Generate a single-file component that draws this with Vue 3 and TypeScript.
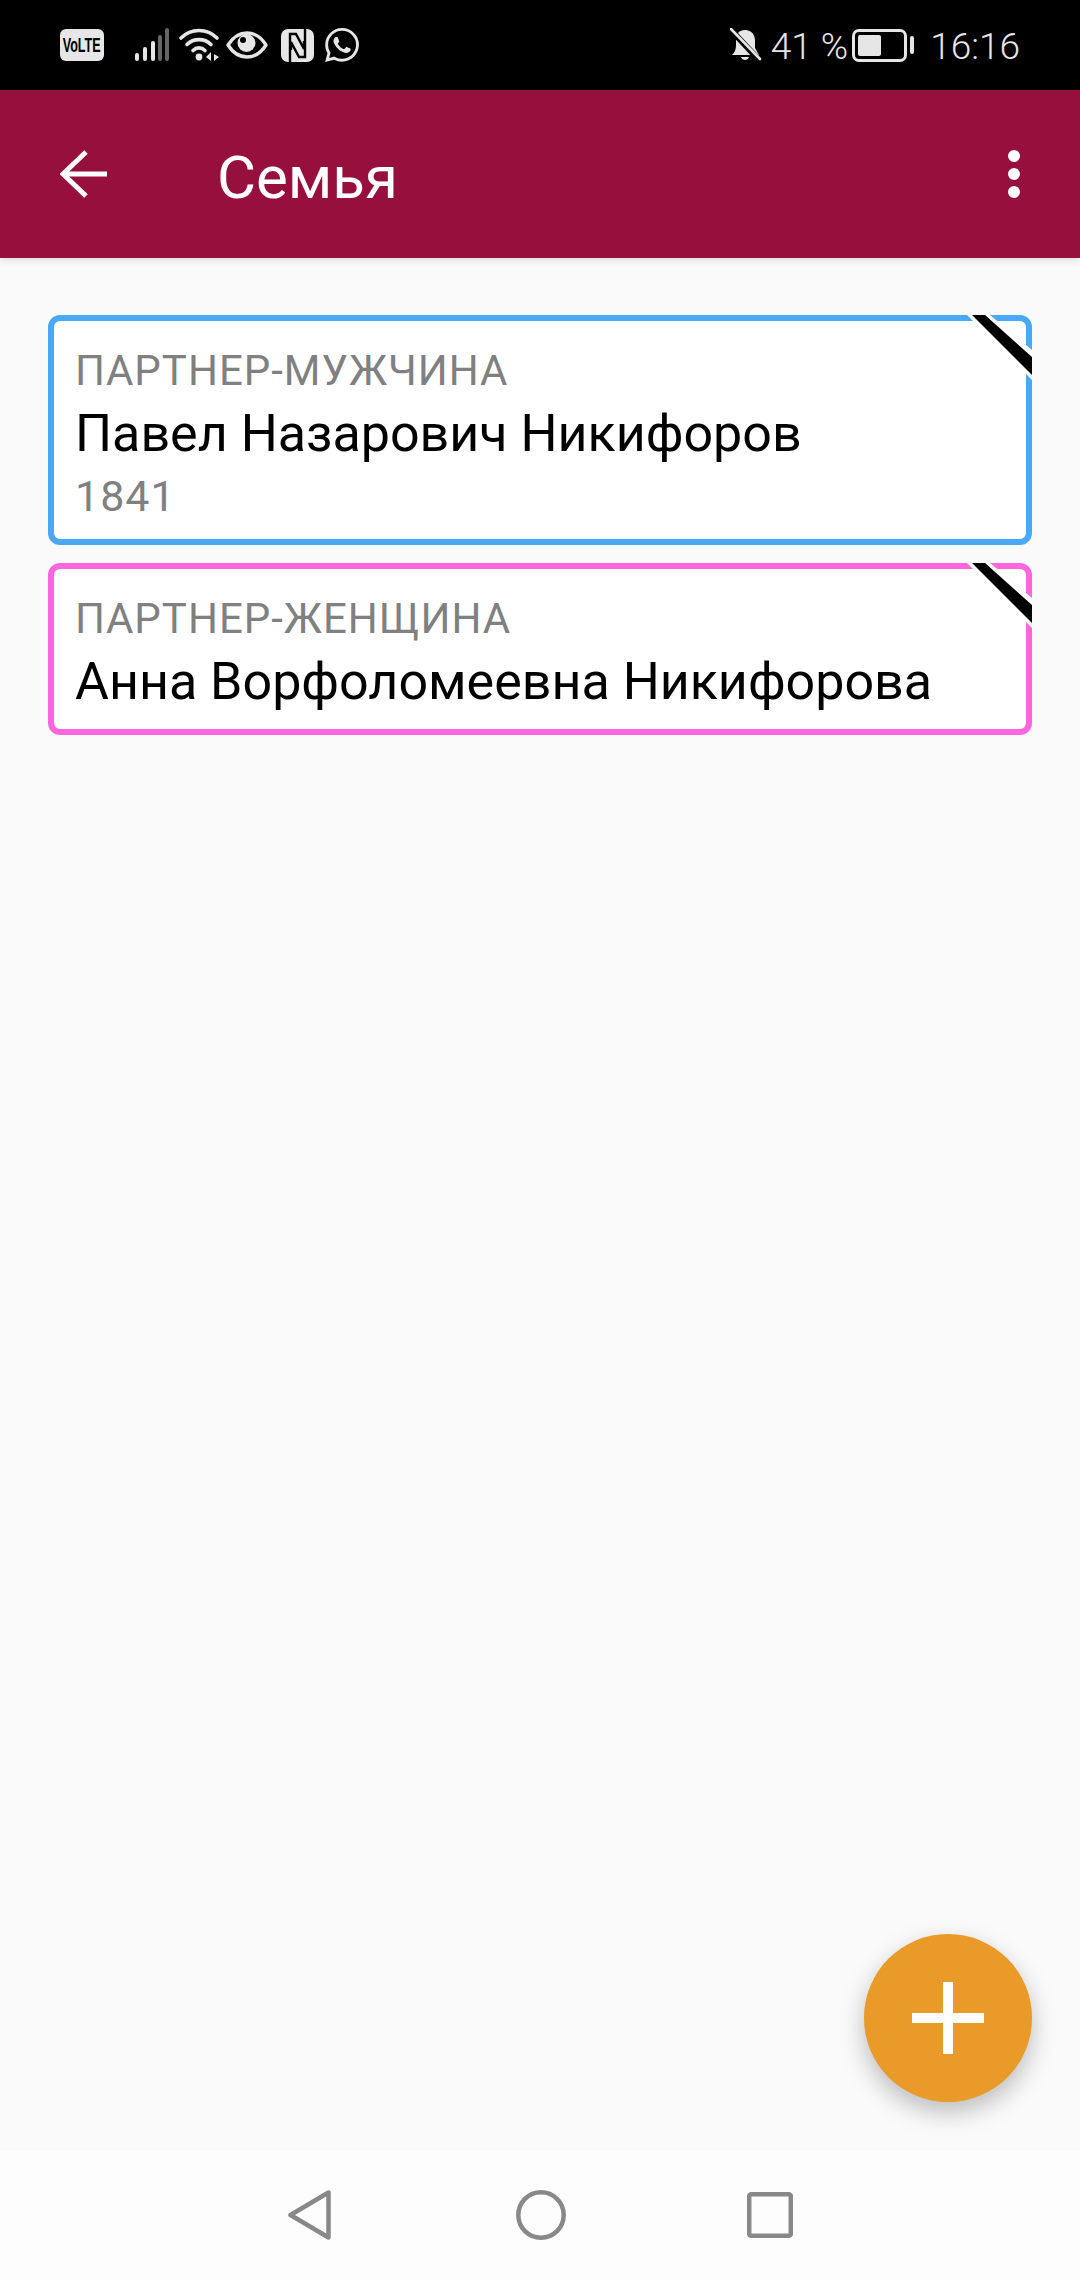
<template>
  <div class="screen">
    <div class="status-bar">
      <div class="status-left">
        <div class="volte"><span>VoLTE</span></div>
        <svg class="ic-signal" width="36" height="34" viewBox="0 0 36 34">
          <rect x="1" y="25" width="4" height="8" rx="2" fill="#e6e6e6" />
          <rect x="9" y="19" width="4" height="14" rx="2" fill="#e6e6e6" />
          <rect x="17" y="13" width="4" height="20" rx="2" fill="#e6e6e6" />
          <rect x="24" y="7" width="4" height="26" rx="2" fill="#666" />
          <rect x="31" y="0" width="4" height="33" rx="2" fill="#666" />
        </svg>
        <svg class="ic-wifi" width="42" height="34" viewBox="0 0 42 34">
          <path d="M2 10 C12 0 28 0 38 10" fill="none" stroke="#e6e6e6" stroke-width="3.6" stroke-linecap="round" />
          <path d="M8 16.5 C14.5 10 25.5 10 32 16.5" fill="none" stroke="#e6e6e6" stroke-width="3.6" stroke-linecap="round" />
          <path d="M14 22.5 C17.5 19 22.5 19 26 22.5" fill="none" stroke="#e6e6e6" stroke-width="3.6" stroke-linecap="round" />
          <circle cx="20" cy="29" r="3.4" fill="#e6e6e6" />
          <path d="M32 24 V33 L27 29 Z M35 26 V33 L40 29 Z" fill="#e6e6e6" />
        </svg>
        <svg class="ic-eye" width="42" height="30" viewBox="0 0 42 30">
          <path d="M2 15 C12 -1 30 -1 40 15 C30 31 12 31 2 15 Z" fill="none" stroke="#e6e6e6" stroke-width="3.4" stroke-linejoin="round" />
          <circle cx="20.5" cy="13" r="9" fill="#e6e6e6" />
          <circle cx="17" cy="10" r="3" fill="#000" />
        </svg>
        <svg class="ic-nfc" width="33" height="33" viewBox="0 0 33 33">
          <rect width="33" height="33" rx="7" fill="#e6e6e6" />
          <path d="M9 33 V5 H15 L23 20 V12" fill="none" stroke="#000" stroke-width="2.4" />
          <path d="M24 0 V28 H18 L10 13 V21" fill="none" stroke="#000" stroke-width="2.4" />
        </svg>
        <svg class="ic-whatsapp" width="34" height="34" viewBox="0 0 24 24">
          <path fill="#e6e6e6" d="M17.472 14.382c-.297-.149-1.758-.867-2.03-.967-.273-.099-.471-.148-.67.15-.197.297-.767.966-.94 1.164-.173.199-.347.223-.644.075-.297-.15-1.255-.463-2.39-1.475-.883-.788-1.48-1.761-1.653-2.059-.173-.297-.018-.458.13-.606.134-.133.298-.347.446-.52.149-.174.198-.298.298-.497.099-.198.05-.371-.025-.52-.075-.149-.669-1.612-.916-2.207-.242-.579-.487-.5-.669-.51-.173-.008-.371-.01-.57-.01-.198 0-.52.074-.792.372-.272.297-1.04 1.016-1.04 2.479 0 1.462 1.065 2.875 1.213 3.074.149.198 2.096 3.2 5.077 4.487.709.306 1.262.489 1.694.625.712.227 1.36.195 1.871.118.571-.085 1.758-.719 2.006-1.413.248-.694.248-1.289.173-1.413-.074-.124-.272-.198-.57-.347m-5.421 7.403h-.004a9.87 9.87 0 01-5.031-1.378l-.361-.214-3.741.982.998-3.648-.235-.374a9.86 9.86 0 01-1.51-5.26c.001-5.45 4.436-9.884 9.888-9.884 2.64 0 5.122 1.03 6.988 2.898a9.825 9.825 0 012.893 6.994c-.003 5.45-4.437 9.884-9.885 9.884m8.413-18.297A11.815 11.815 0 0012.05 0C5.495 0 .16 5.335.157 11.892c0 2.096.547 4.142 1.588 5.945L.057 24l6.305-1.654a11.882 11.882 0 005.683 1.448h.005c6.554 0 11.89-5.335 11.893-11.893a11.821 11.821 0 00-3.48-8.413z" />
        </svg>
      </div>
      <div class="status-right">
        <svg class="ic-bell" width="32" height="34" viewBox="0 0 32 34">
          <path d="M15 2 C22 2 25 7 25 13 V20 L29 27 H2 C5 24 6 21 6 17 V12 C6 6 9 2 15 2 Z" fill="#e6e6e6" />
          <path d="M11 29 H19 C18 33 12 33 11 29 Z" fill="#e6e6e6" />
          <path d="M1 2 L30 33" stroke="#000" stroke-width="6" />
          <path d="M1 1 L30 31" stroke="#e6e6e6" stroke-width="2.6" stroke-linecap="round" />
        </svg>
        <span class="status-text pct">41 %</span>
        <div class="battery">
          <div class="battery-body"><div class="battery-level"></div></div>
          <div class="battery-tip"></div>
        </div>
        <span class="status-text clock">16:16</span>
      </div>
    </div>

    <header class="toolbar">
      <svg class="back" width="48" height="48" viewBox="0 0 48 48">
        <path d="M47 24 H3 M26 2 L3 24 L26 46" fill="none" stroke="#fff" stroke-width="5" />
      </svg>
      <h1 class="title">Семья</h1>
      <div class="more">
        <span></span><span></span><span></span>
      </div>
    </header>

    <main class="content">
      <div v-for="p in people" :key="p.role" class="card" :class="p.gender">
        <div class="role">{{ p.role }}</div>
        <div class="name">{{ p.name }}</div>
        <div v-if="p.year" class="year">{{ p.year }}</div>
        <svg class="ribbon" width="66" height="66" viewBox="0 0 66 66">
          <path d="M1 0 H24 L66 35 V65 Z" fill="#fff" />
          <path d="M6 0 H19 L66 42 V60 Z" fill="#000" />
        </svg>
      </div>
      <button class="fab">
        <svg width="72" height="72" viewBox="0 0 72 72">
          <path d="M31 0 H41 V31 H72 V41 H41 V72 H31 V41 H0 V31 H31 Z" fill="#fff" />
        </svg>
      </button>
    </main>

    <nav class="nav-bar">
      <svg class="nav-back" width="43" height="50" viewBox="0 0 43 50">
        <path d="M40.500 2.500 V47.500 L2.500 25 Z" fill="none" stroke="#888" stroke-width="4.500" stroke-linejoin="round" />
      </svg>
      <svg width="50" height="50" viewBox="0 0 50 50">
        <circle cx="25" cy="25" r="22.700" fill="none" stroke="#888" stroke-width="4.500" />
      </svg>
      <svg width="46" height="46" viewBox="0 0 46 46">
        <rect x="2.200" y="2.200" width="41.600" height="41.600" rx="2" fill="none" stroke="#888" stroke-width="4.500" />
      </svg>
    </nav>
  </div>
</template>

<script setup lang="ts">
interface Person {
  role: string
  name: string
  year?: string
  gender: 'male' | 'female'
}

const people: Person[] = [
  { role: 'ПАРТНЕР-МУЖЧИНА', name: 'Павел Назарович Никифоров', year: '1841', gender: 'male' },
  { role: 'ПАРТНЕР-ЖЕНЩИНА', name: 'Анна Ворфоломеевна Никифорова', gender: 'female' },
]
</script>

<style>
html,
body {
  margin: 0;
  background: #fafafa;
}
</style>

<style scoped>
.screen {
  width: 1080px;
  height: 2280px;
  display: flex;
  flex-direction: column;
  font-family: Roboto, "Noto Sans", sans-serif;
  background: #fafafa;
  overflow: hidden;
}

.status-bar {
  height: 90px;
  flex: none;
  background: #000;
  display: flex;
  align-items: center;
  justify-content: space-between;
  padding: 0 60px;
  box-sizing: border-box;
  color: #e6e6e6;
}

.status-left,
.status-right {
  display: flex;
  align-items: center;
}

.volte {
  width: 44px;
  height: 32px;
  border-radius: 6px;
  background: #e6e6e6;
  color: #000;
  font: 700 21px/32px "Liberation Sans", sans-serif;
  display: flex;
  justify-content: center;
}

.volte span {
  display: inline-block;
  transform: scaleX(0.6);
}

.ic-signal { margin-left: 30px; }
.ic-wifi { margin-left: 9px; }
.ic-eye { margin-left: 5px; }
.ic-nfc { margin-left: 13px; }
.ic-whatsapp { margin-left: 11px; }

.status-text {
  font-size: 37px;
  font-weight: 300;
  line-height: 40px;
  margin-top: 4px;
}

.pct { margin-left: 9px; }

.battery {
  display: flex;
  align-items: center;
  margin-left: 4px;
}

.battery-body {
  width: 55px;
  height: 33px;
  border: 3px solid #e6e6e6;
  border-radius: 7px;
  box-sizing: border-box;
  padding: 3px;
}

.battery-level {
  width: 23px;
  height: 100%;
  background: #e6e6e6;
  border-radius: 2px;
}

.battery-tip {
  width: 4px;
  height: 18px;
  margin-left: 3px;
  background: #e6e6e6;
  border-radius: 2px;
}

.clock { margin-left: 16px; }

.toolbar {
  height: 168px;
  flex: none;
  background: #960f3d;
  display: flex;
  align-items: center;
  padding: 0 60px;
  box-sizing: border-box;
  box-shadow: 0 2px 8px rgba(0, 0, 0, 0.12);
  position: relative;
  color: #fff;
}

.back { flex: none; }

.title {
  margin: 6px 0 0 109px;
  flex: 1;
  font-size: 60px;
  font-weight: 400;
}

.more {
  display: flex;
  flex-direction: column;
  gap: 6px;
}

.more span {
  width: 12px;
  height: 12px;
  border-radius: 50%;
  background: #fff;
}

.content {
  flex: 1;
  position: relative;
  padding: 57px 48px 0;
  display: flex;
  flex-direction: column;
  gap: 18px;
}

.card {
  position: relative;
  background: #fff;
  border: 6px solid;
  border-radius: 12px;
  padding: 25px 18px 11px 21px;
}

.card.male { border-color: #4aa8f8; }
.card.female { border-color: #ff66dd; }

.role {
  font-size: 42px;
  line-height: 50px;
  letter-spacing: 1px;
  color: #808080;
}

.name {
  font-size: 52px;
  line-height: 72px;
  margin-top: 2px;
  color: #000;
}

.year {
  font-size: 43px;
  line-height: 50px;
  letter-spacing: 1px;
  margin-top: 1px;
  padding-bottom: 7px;
  color: #808080;
}

.ribbon {
  position: absolute;
  top: -6px;
  right: -6px;
}

.fab {
  position: absolute;
  left: 864px;
  top: 1676px;
  width: 168px;
  height: 168px;
  padding: 0;
  border: none;
  border-radius: 50%;
  background: #e99a28;
  box-shadow: 0 10px 24px rgba(0, 0, 0, 0.25);
  display: flex;
  align-items: center;
  justify-content: center;
}

.nav-bar {
  height: 130px;
  flex: none;
  background: #fdfdfd;
  display: flex;
  align-items: center;
  justify-content: center;
  gap: 181px;
}

.nav-back { margin-right: 4px; }
</style>
